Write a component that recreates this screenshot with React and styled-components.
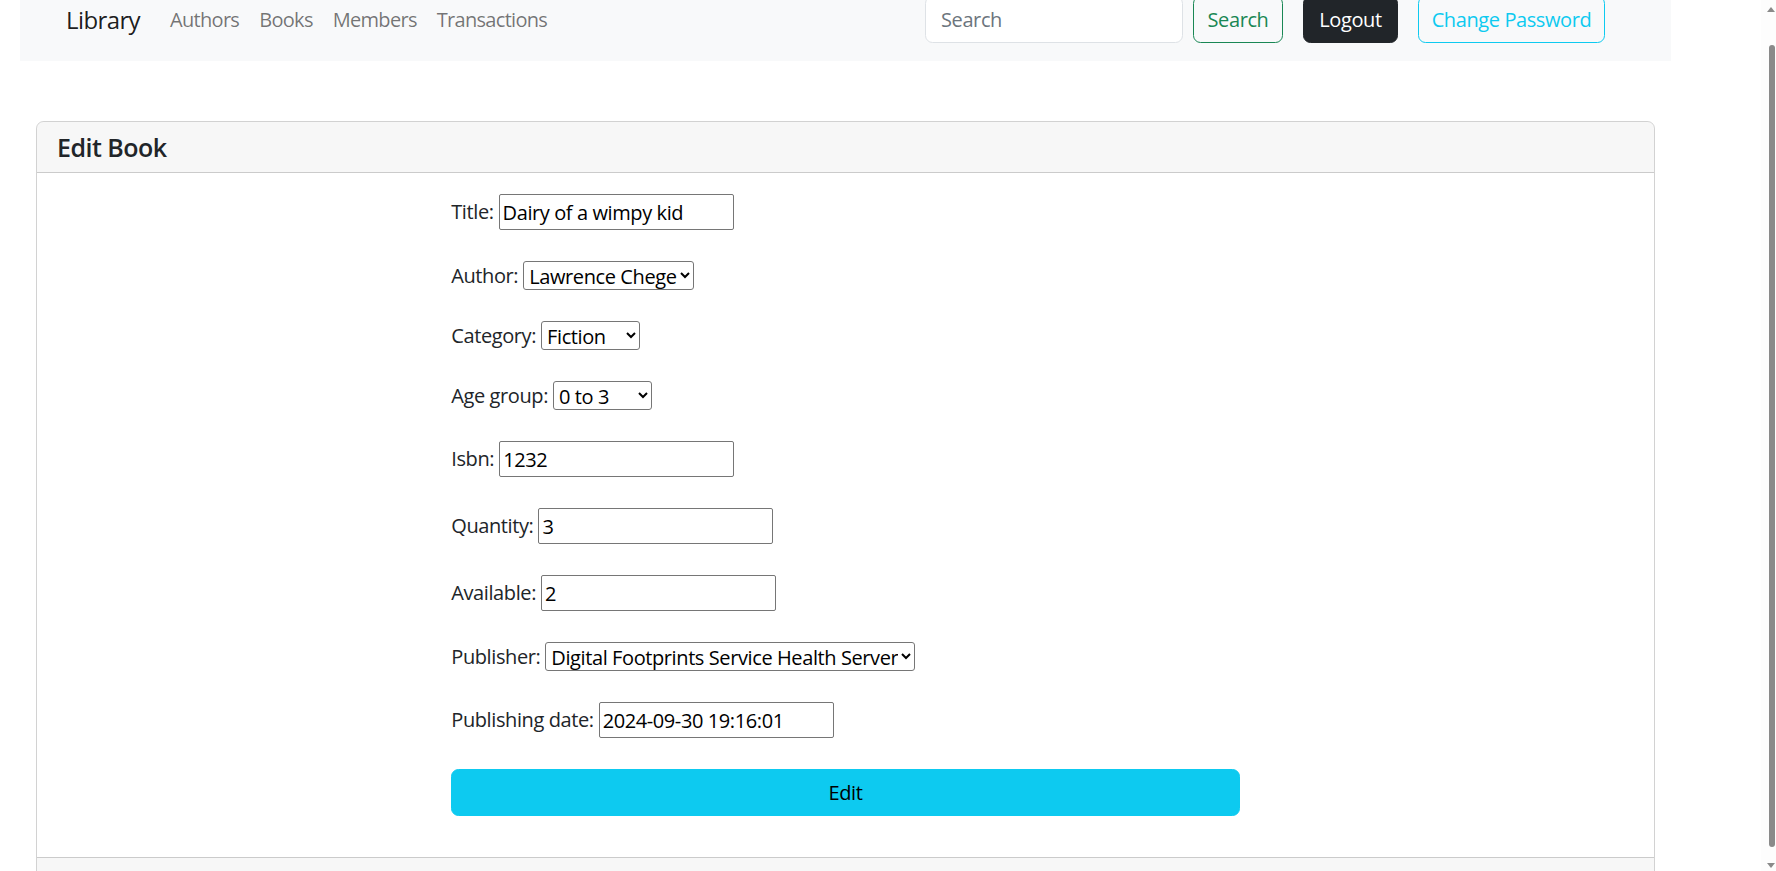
import React, { useLayoutEffect } from 'react';
import styled, { createGlobalStyle } from 'styled-components';

const FONT = `"Open Sans", "Noto Sans", "Liberation Sans", sans-serif`;

const GlobalStyle = createGlobalStyle`
  *, *::before, *::after { box-sizing: border-box; }
  html, body { margin: 0; padding: 0; background: #fff; }
  body {
    font-family: ${FONT};
    font-size: 20px;
    line-height: 1.5;
    letter-spacing: -0.4px;
    color: #212529;
  }
  input, select, button { letter-spacing: inherit; }
`;

const Page = styled.div`
  width: 1651px;
  margin-left: 20px;
  padding-bottom: 2px;
`;

const Navbar = styled.nav`
  display: flex;
  align-items: center;
  justify-content: space-between;
  height: 93px;
  background: #f8f9fa;
  padding: 28px 66px 18px 46px;
`;

const NavLeft = styled.div`
  display: flex;
  align-items: center;
`;

const Brand = styled.a`
  font-size: 24px;
  line-height: 1.5;
  letter-spacing: -0.6px;
  margin-right: 20px;
  color: rgba(0, 0, 0, 0.9);
  text-decoration: none;
`;

const NavLink = styled.a`
  padding: 0 10px;
  font-size: 20px;
  letter-spacing: -0.7px;
  color: rgba(0, 0, 0, 0.55);
  text-decoration: none;
`;

const NavRight = styled.div`
  display: flex;
  align-items: center;
`;

const SearchInput = styled.input`
  width: 258px;
  height: 47px;
  margin-right: 10px;
  padding: 7px 15px;
  font: inherit;
  color: #212529;
  background: #fff;
  border: 1px solid #dee2e6;
  border-radius: 7.5px;
  &::placeholder { color: #6c757d; }
`;

const Button = styled.button`
  width: ${p => p.$w}px;
  height: 47px;
  padding: 0;
  margin-left: ${p => p.$ml || 0}px;
  font: inherit;
  font-size: 20px;
  border-radius: 7.5px;
  border: 1px solid ${p => p.$color};
  background: ${p => (p.$solid ? p.$color : 'transparent')};
  color: ${p => p.$text || p.$color};
  cursor: pointer;
`;

const Card = styled.section`
  margin: 60px 16px 0;
  border: 1px solid rgba(0, 0, 0, 0.175);
  border-radius: 7.5px;
  overflow: hidden;
`;

const CardHeader = styled.div`
  padding: 10px 20px;
  background: rgba(0, 0, 0, 0.03);
  border-bottom: 1px solid rgba(0, 0, 0, 0.175);
`;

const CardTitle = styled.h5`
  margin: 0;
  font-size: 25px;
  font-weight: 600;
  line-height: 1.2;
  letter-spacing: -0.5px;
  color: #212529;
`;

const CardBody = styled.div`
  padding: 21px 20px 21px;
`;

const CardFooter = styled.div`
  height: 21px;
  background: rgba(0, 0, 0, 0.03);
  border-top: 1px solid rgba(0, 0, 0, 0.175);
`;

const Form = styled.form`
  width: 50%;
  margin: 0 auto 20px;
  display: flex;
  flex-direction: column;
  gap: 31px;
`;

const Row = styled.div`
  display: flex;
  align-items: center;
  gap: 5px;
`;

const Label = styled.label`
  line-height: 1.2;
  color: #212529;
  white-space: nowrap;
`;

const TextField = styled.input`
  width: ${p => p.$w}px;
  height: 36px;
  padding: 1px 3px;
  font: inherit;
  line-height: normal;
  color: #000;
  background: #fff;
  border: 1px solid #767676;
  border-radius: 2px;
`;

const SelectField = styled.select`
  width: ${p => p.$w}px;
  height: 29px;
  padding: 0 0 0 1px;
  font-family: inherit;
  font-size: 20px;
  color: #000;
  background: #fff;
  border: 1px solid #767676;
  border-radius: 3px;
`;

const SubmitButton = styled.button`
  width: 100%;
  height: 47px;
  font: inherit;
  font-size: 20px;
  color: #000;
  background: #0dcaf0;
  border: 1px solid #0dcaf0;
  border-radius: 7.5px;
  cursor: pointer;
`;

const Scrollbar = styled.div`
  position: fixed;
  top: 0;
  right: 0;
  width: 15px;
  height: 871px;
  background: #fdfdfd;
`;

const ScrollThumb = styled.div`
  position: absolute;
  top: 45px;
  right: 1px;
  width: 6px;
  height: 802px;
  border-radius: 3px;
  background: #8a8a8a;
`;

const ScrollArrow = styled.div`
  position: absolute;
  right: 1px;
  ${p => (p.$down ? 'bottom: 3px;' : 'top: 7px;')}
  width: 0;
  height: 0;
  border-left: 4px solid transparent;
  border-right: 4px solid transparent;
  ${p => (p.$down ? 'border-top: 5px solid #8a8a8a;' : 'border-bottom: 5px solid #8a8a8a;')}
`;

const fields = [
  { label: 'Title:', type: 'text', value: 'Dairy of a wimpy kid', w: 235 },
  { label: 'Author:', type: 'select', value: 'Lawrence Chege', w: 171 },
  { label: 'Category:', type: 'select', value: 'Fiction', w: 99 },
  { label: 'Age group:', type: 'select', value: '0 to 3', w: 99 },
  { label: 'Isbn:', type: 'text', value: '1232', w: 235 },
  { label: 'Quantity:', type: 'text', value: '3', w: 235 },
  { label: 'Available:', type: 'text', value: '2', w: 235 },
  { label: 'Publisher:', type: 'select', value: 'Digital Footprints Service Health Server', w: 370 },
  { label: 'Publishing date:', type: 'text', value: '2024-09-30 19:16:01', w: 235 },
];

export default function App() {
  useLayoutEffect(() => {
    window.scrollTo(0, 32);
  }, []);

  return (
    <>
      <GlobalStyle />
      <Page>
        <Navbar>
          <NavLeft>
            <Brand href="#">Library</Brand>
            <NavLink href="#">Authors</NavLink>
            <NavLink href="#">Books</NavLink>
            <NavLink href="#">Members</NavLink>
            <NavLink href="#">Transactions</NavLink>
          </NavLeft>
          <NavRight>
            <SearchInput type="search" placeholder="Search" />
            <Button $w={90} $color="#198754">Search</Button>
            <Button $w={95} $color="#212529" $solid $text="#fff" $ml={20}>Logout</Button>
            <Button $w={187} $color="#0dcaf0" $ml={20}>Change Password</Button>
          </NavRight>
        </Navbar>
        <Card>
          <CardHeader>
            <CardTitle>Edit Book</CardTitle>
          </CardHeader>
          <CardBody>
            <Form onSubmit={e => e.preventDefault()}>
              {fields.map(f => (
                <Row key={f.label}>
                  <Label>{f.label}</Label>
                  {f.type === 'select' ? (
                    <SelectField $w={f.w} defaultValue={f.value}>
                      <option value={f.value}>{f.value}</option>
                    </SelectField>
                  ) : (
                    <TextField $w={f.w} type="text" defaultValue={f.value} />
                  )}
                </Row>
              ))}
              <SubmitButton type="submit">Edit</SubmitButton>
            </Form>
          </CardBody>
          <CardFooter />
        </Card>
      </Page>
      <Scrollbar aria-hidden="true">
        <ScrollArrow />
        <ScrollThumb />
        <ScrollArrow $down />
      </Scrollbar>
    </>
  );
}
